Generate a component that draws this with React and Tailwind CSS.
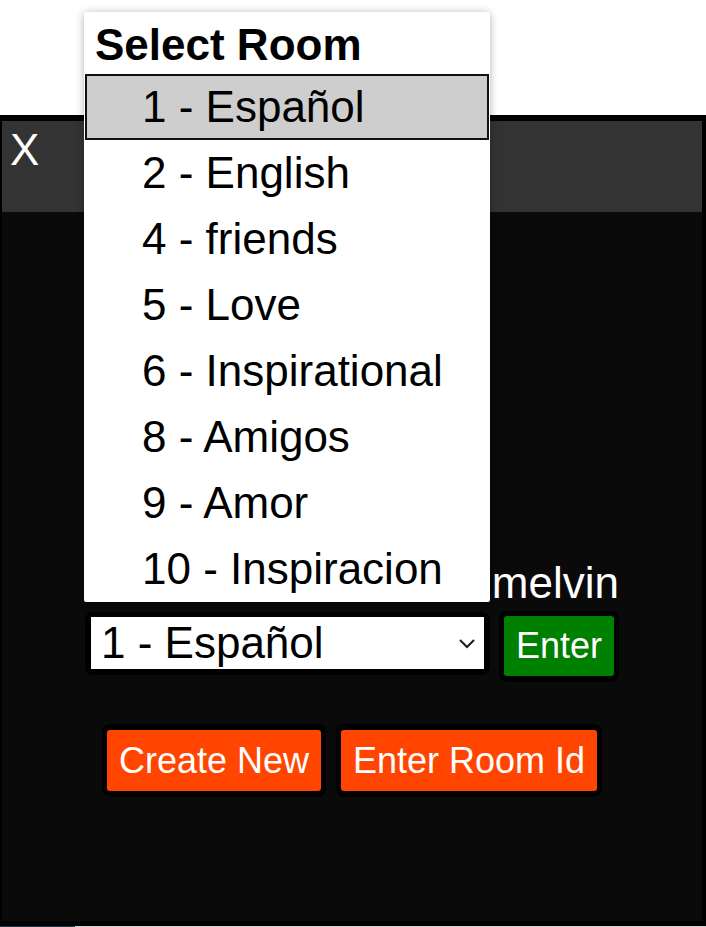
import React from "react";

const rooms = [
  "1 - Español",
  "2 - English",
  "4 - friends",
  "5 - Love",
  "6 - Inspirational",
  "8 - Amigos",
  "9 - Amor",
  "10 - Inspiracion",
];

const RoomMenu = () => (
  <div className="absolute left-[84px] top-[12px] w-[406px] bg-white shadow-[0_1px_8px_rgba(0,0,0,0.3)] rounded-[2px] text-black">
    <div className="h-[62px] pl-[11px] pt-[8px] text-[44px] font-bold leading-[50px]">Select Room</div>
    {rooms.map((room, i) => (
      <div
        key={room}
        className={
          i === 0
            ? "h-[66px] mx-[1px] pl-[55px] flex items-center text-[44px] leading-none bg-[#cecece] border-2 border-[#111]"
            : "h-[66px] mx-[1px] pl-[57px] flex items-center text-[44px] leading-none"
        }
      >
        {room}
      </div>
    ))}
  </div>
);

const Framed = ({ children, className }) => (
  <div className={"bg-black rounded-[8px] " + className}>{children}</div>
);

export default function App() {
  return (
    <div className="relative w-[706px] h-[927px] overflow-hidden bg-white font-['Liberation_Sans',Arial,sans-serif]">
      <div className="pt-[115px]">
        <div className="h-[811px] flex flex-col bg-[#0a0a0a] border-black border-t-[6px] border-l-2 border-r-4 border-b-[5px]">
          <div className="h-[91px] bg-[#333333] pl-[8px] pt-[3px] text-white text-[44px] leading-[51px]">X</div>

          <div className="flex flex-col items-center">
            <div className="w-[534px] mt-[345px] text-right text-white text-[44px] leading-[51px]">melvin</div>

            <div className="w-[534px] mt-[4px] flex items-start gap-[9px]">
              <Framed className="w-[406px] h-[63px] p-[5px] pl-[6px] pr-[6px]">
                <div className="h-[52px] bg-white flex items-center justify-between pl-[10px] pr-[8px] text-black text-[44px] leading-none">
                  <span>1 - Español</span>
                  <svg width="18" height="11" viewBox="0 0 18 11" fill="none">
                    <path d="M2 2 L9 9 L16 2" stroke="#222" strokeWidth="2.2" />
                  </svg>
                </div>
              </Framed>
              <Framed className="mt-[-1px] p-[5px] pb-[6px]">
                <button className="h-[60px] bg-[#008000] text-white text-[36px] leading-none px-[12px] rounded-[3px]">
                  Enter
                </button>
              </Framed>
            </div>

            <div className="mt-[42px] flex gap-[10px]">
              <Framed className="p-[5px] pt-[6px] pb-[6px]">
                <button className="h-[61px] bg-[#ff4500] text-white text-[36px] leading-none px-[12px] rounded-[3px]">
                  Create New
                </button>
              </Framed>
              <Framed className="p-[5px] pt-[6px] pb-[6px]">
                <button className="h-[61px] bg-[#ff4500] text-white text-[36px] leading-none px-[12px] rounded-[3px]">
                  Enter Room Id
                </button>
              </Framed>
            </div>
          </div>
        </div>
        <div className="flex h-px">
          <div className="w-[75px] bg-[#1d3a44]" />
          <div className="flex-1 bg-[#d0d0d0]" />
        </div>
      </div>

      <RoomMenu />
    </div>
  );
}
